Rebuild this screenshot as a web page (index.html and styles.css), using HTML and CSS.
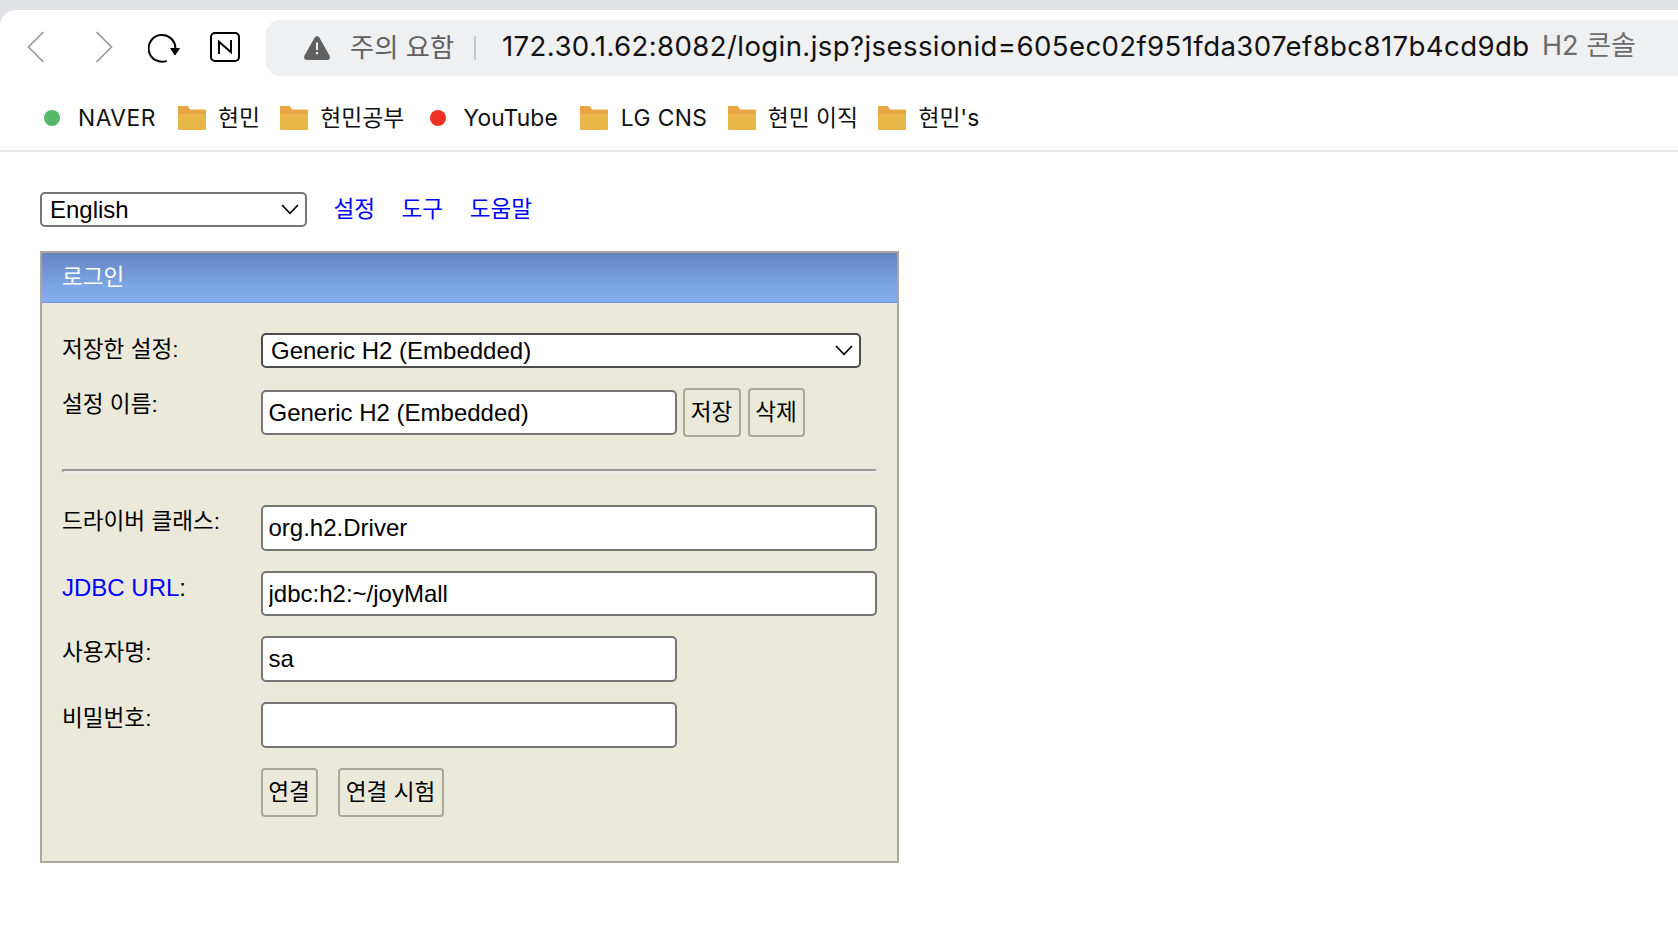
FILE: index.html
```html
<!DOCTYPE html>
<html lang="ko">
<head>
    <meta charset="UTF-8">
    <title>H2 콘솔</title>
    <link rel="stylesheet" href="styles.css">
</head>
<body>
    <svg width="0" height="0" class="defs">
        <symbol id="folder" viewBox="0 0 28 24">
            <path d="M0 1Q0 0 1 0H9Q10 0 10.5 1L12 3.5H27Q28 3.5 28 4.5V10H0Z" fill="#e8a545"/>
            <path d="M0 8H28V23Q28 24 27 24H1Q0 24 0 23Z" fill="#e9b649"/>
        </symbol>
        <symbol id="arrow" viewBox="0 0 18 12">
            <path d="M1 1L9 9.3L17 1" fill="none" stroke="#000" stroke-width="1.7"/>
        </symbol>
    </svg>

    <header class="browser">
        <div class="toolbar">
            <svg class="nav-icon back" width="18" height="32" viewBox="0 0 18 32"><path d="M16.5 1L1.5 16L16.5 31" fill="none" stroke="#999" stroke-width="1.7"/></svg>
            <svg class="nav-icon forward" width="18" height="32" viewBox="0 0 18 32"><path d="M1.5 1L16.5 16L1.5 31" fill="none" stroke="#999" stroke-width="1.7"/></svg>
            <svg class="nav-icon reload" width="34" height="32" viewBox="0 0 34 32">
                <path d="M18.7 28.9A13.4 13.4 0 1 1 27.4 16" fill="none" stroke="#000" stroke-width="2"/>
                <path d="M22.7 16.5H31.3L27 23Z" fill="#000" stroke="#000" stroke-width="1" stroke-linejoin="round"/>
            </svg>
            <svg class="nav-icon naver" width="30" height="30" viewBox="0 0 30 30">
                <rect x="1" y="1" width="28" height="28" rx="4" fill="none" stroke="#000" stroke-width="2"/>
                <path d="M9 22V9.8L21 20.2V8" fill="none" stroke="#000" stroke-width="2"/>
            </svg>
            <div class="address">
                <svg class="warning" width="26" height="24" viewBox="0 0 26 24">
                    <path d="M10.5 1.8Q13-1.8 15.5 1.8L25.5 19.5Q27 24 22.5 24H3.5Q-1 24 .5 19.5Z" fill="#606060"/>
                    <path d="M13 6.5V14M13 16V18.3" stroke="#eff0f2" stroke-width="2"/>
                </svg>
                <span class="caution">주의 요함</span>
                <span class="divider"></span>
                <span class="url">172.30.1.62:8082/login.jsp?jsessionid=605ec02f951fda307ef8bc817b4cd9db</span>
                <span class="page-title">H2 콘솔</span>
            </div>
        </div>
        <nav class="bookmarks">
            <a class="site naver-site"><i class="dot green"></i><span>NAVER</span></a>
            <a class="dir"><svg width="28" height="24"><use href="#folder"/></svg><span>현민</span></a>
            <a class="dir"><svg width="28" height="24"><use href="#folder"/></svg><span>현민공부</span></a>
            <a class="site youtube-site"><i class="dot red"></i><span>YouTube</span></a>
            <a class="dir wide"><svg width="28" height="24"><use href="#folder"/></svg><span>LG CNS</span></a>
            <a class="dir"><svg width="28" height="24"><use href="#folder"/></svg><span>현민 이직</span></a>
            <a class="dir"><svg width="28" height="24"><use href="#folder"/></svg><span>현민's</span></a>
        </nav>
    </header>

    <main>
        <div class="top-links">
            <div class="select language">
                <select><option>English</option></select>
                <svg width="18" height="12"><use href="#arrow"/></svg>
            </div>
            <a href="#">설정</a>
            <a href="#">도구</a>
            <a href="#">도움말</a>
        </div>

        <form class="login">
            <h1>로그인</h1>
            <div class="fields">
                <div class="row saved">
                    <label>저장한 설정:</label>
                    <div class="select setting">
                        <select><option>Generic H2 (Embedded)</option></select>
                        <svg width="18" height="12"><use href="#arrow"/></svg>
                    </div>
                </div>
                <div class="row name">
                    <label>설정 이름:</label>
                    <input class="short" type="text" value="Generic H2 (Embedded)">
                    <button type="button" class="save">저장</button>
                    <button type="button" class="remove">삭제</button>
                </div>
                <hr>
                <div class="row">
                    <label>드라이버 클래스:</label>
                    <input class="long" type="text" value="org.h2.Driver">
                </div>
                <div class="row">
                    <label class="latin"><a href="#">JDBC URL</a>:</label>
                    <input class="long" type="text" value="jdbc:h2:~/joyMall">
                </div>
                <div class="row">
                    <label>사용자명:</label>
                    <input class="short" type="text" value="sa">
                </div>
                <div class="row">
                    <label>비밀번호:</label>
                    <input class="short" type="password">
                </div>
                <div class="row actions">
                    <button type="button" class="connect">연결</button>
                    <button type="button" class="test">연결 시험</button>
                </div>
            </div>
        </form>
    </main>
</body>
</html>
```
FILE: styles.css
```css
* {
    box-sizing: border-box;
}

body {
    margin: 0;
    height: 934px;
    overflow: hidden;
    background: #fff;
    color: #000;
    font: 22.6px "Liberation Sans", "Noto Sans CJK KR", sans-serif;
}

a {
    color: #0000ff;
    text-decoration: none;
}

svg {
    display: block;
    flex: none;
}

.defs {
    position: absolute;
}

/* browser bars */
.browser {
    height: 152px;
    padding-top: 10px;
    background: #e1e2e6;
    border-bottom: 2px solid #e6e6e6;
    font-family: Inter, "Noto Sans CJK KR", sans-serif;
    white-space: nowrap;
}

.toolbar {
    display: flex;
    height: 66px;
    padding: 10px 0 0 27px;
    background: #fff;
    border-top-left-radius: 16px;
}

.nav-icon {
    margin-top: 11px;
}

.forward {
    margin-left: 50px;
}

.reload {
    margin-left: 35px;
    margin-top: 12px;
}

.naver {
    margin-left: 28px;
    margin-top: 12px;
}

.address {
    flex: 1;
    display: flex;
    align-items: center;
    height: 56px;
    margin-left: 26px;
    padding-left: 38px;
    background: #eff0f2;
    border-radius: 14px 0 0 14px;
    line-height: 56px;
}

.caution {
    width: 124px;
    margin-left: 20px;
    font-size: 26.3px;
    color: #606060;
}

.divider {
    width: 2px;
    height: 24px;
    background: #c4c5c7;
}

.url {
    width: 1040px;
    margin: -4px 0 0 26px;
    color: #111;
    font-size: 27.6px;
    letter-spacing: .38px;
}

.page-title {
    margin-top: -4px;
    color: #6c6c6c;
    font-size: 27px;
}

.bookmarks {
    display: flex;
    height: 74px;
    padding-left: 44px;
    background: #fff;
    line-height: 84px;
    font-size: 22.8px;
}

.bookmarks a {
    display: flex;
    align-items: center;
    height: 84px;
    color: #111;
}

.bookmarks .dir {
    gap: 12px;
    margin-right: 20.4px;
}

.bookmarks .wide {
    gap: 13px;
    letter-spacing: .4px;
}

.site {
    gap: 18px;
    margin-right: 22px;
    letter-spacing: .1px;
}

.naver-site {
    letter-spacing: .5px;
}

.youtube-site {
    margin-left: 5px;
}

.dot {
    width: 16px;
    height: 16px;
    border-radius: 50%;
}

.green {
    background: #55b96c;
}

.red {
    background: #eb3223;
}

/* console page */
main {
    padding: 40px 0 0 40px;
}

.top-links {
    display: flex;
    height: 35px;
    line-height: 36px;
}

.top-links a {
    margin-left: 26.5px;
}

.select {
    display: grid;
    align-items: center;
    height: 35px;
}

.select select,
.select svg {
    grid-area: 1 / 1;
}

.select svg {
    justify-self: end;
    margin-right: 8px;
    pointer-events: none;
}

.language {
    width: 267px;
}

.setting {
    width: 600px;
}

select {
    appearance: none;
    width: 100%;
    height: 35px;
    padding: 0 8px;
    border: 2px solid #767676;
    border-radius: 5px;
    background: #fff;
    color: #000;
    font: 24px "Liberation Sans", sans-serif;
}

.setting select {
    border-color: #4c4c4c;
}

.login {
    width: 859px;
    height: 612px;
    margin-top: 24px;
    border: 2px solid #aca899;
    background: #ebe9da;
}

h1 {
    height: 50px;
    margin: 0;
    padding-left: 20px;
    border-bottom: 1px solid #6f96d8;
    background: linear-gradient(#6684c2, #79a3e0 60%, #85aef0);
    color: #fff;
    font-size: 22.6px;
    font-weight: normal;
    line-height: 49px;
}

.fields {
    padding: 30px 20px 0;
}

.row {
    display: flex;
    margin-bottom: 20px;
}

.row label {
    width: 199px;
    line-height: 34px;
}

.row .latin {
    font-size: 24px;
}

.name {
    margin-bottom: 32px;
}

.name input {
    margin-top: 2px;
}

input {
    height: 45.7px;
    padding: 0 5.5px;
    border: 2px solid #767676;
    border-radius: 5px;
    background: #fff;
    color: #000;
    font: 24px "Liberation Sans", sans-serif;
}

.name input {
    height: 45px;
}

.short {
    width: 416px;
}

.long {
    width: 616px;
}

button {
    height: 49px;
    padding: 0 1px 4px 0;
    border: 2px solid #aca899;
    border-radius: 4px;
    background: none;
    color: #000;
    font: 22.6px "Liberation Sans", "Noto Sans CJK KR", sans-serif;
}

.save {
    width: 58px;
    margin-left: 6px;
}

.remove {
    width: 57px;
    margin-left: 7px;
}

hr {
    width: 100%;
    height: 4px;
    margin: 0 0 32px;
    border: 2px solid;
    border-color: #9a9c94 #eee #eee #9a9c94;
}

.actions {
    padding-left: 199px;
}

.connect {
    width: 57px;
}

.test {
    width: 106px;
    margin-left: 20px;
}
```
